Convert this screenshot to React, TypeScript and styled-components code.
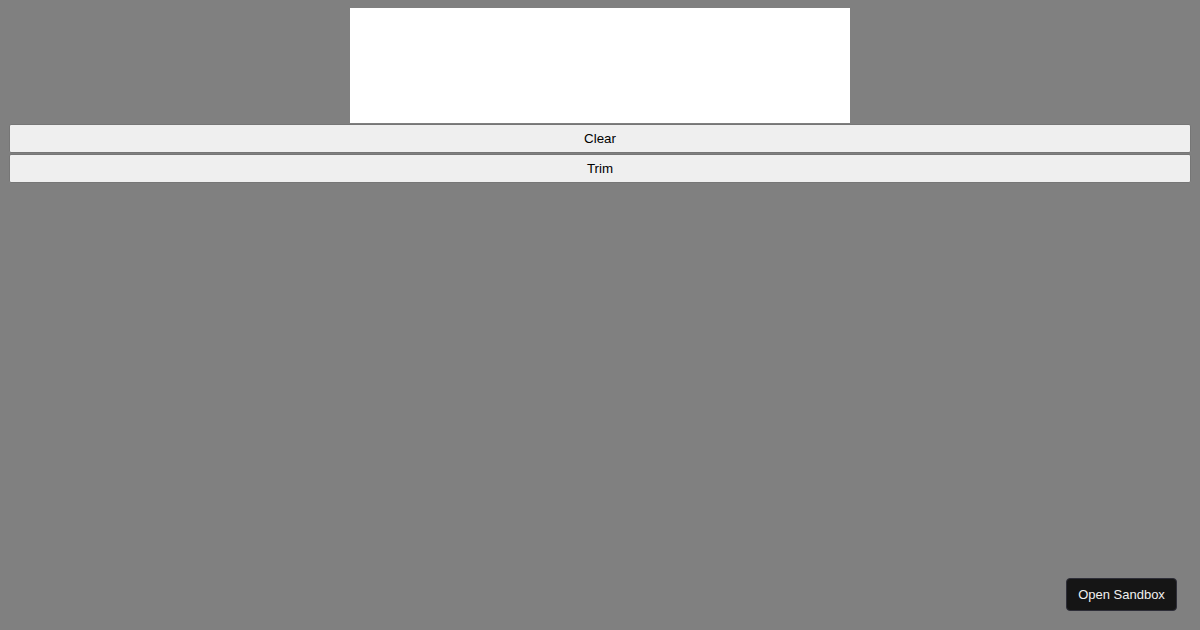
import React from "react";
import styled, { createGlobalStyle } from "styled-components";

const Global = createGlobalStyle`
  html, body { background: #808080; }
  body { margin: 8px; font-family: "Liberation Sans", Arial, sans-serif; }
`;

const Canvas = styled.canvas`
  display: block;
  width: 500px;
  height: 115px;
  margin: 0 auto;
  background: #ffffff;
`;

const ActionButton = styled.button`
  display: block;
  box-sizing: border-box;
  width: calc(100% - 2px);
  height: 29px;
  margin: 1px;
  padding: 0;
  background: #efefef;
  border: 1px solid #767676;
  border-radius: 2px;
  color: #000;
  font-family: "Liberation Sans", Arial, sans-serif;
  font-size: 13.33px;
`;

const SandboxButton = styled.button`
  position: fixed;
  right: 23px;
  bottom: 19px;
  box-sizing: border-box;
  width: 111px;
  height: 33px;
  background: #151515;
  border: 1px solid #2e2e38;
  border-radius: 4px;
  color: #f0f0f0;
  font-family: "Liberation Sans", Arial, sans-serif;
  font-size: 13px;
  padding: 0;
`;

export default function App() {
  return (
    <>
      <Global />
      <Canvas width={500} height={115} />
      <ActionButton>Clear</ActionButton>
      <ActionButton>Trim</ActionButton>
      <SandboxButton>Open Sandbox</SandboxButton>
    </>
  );
}
